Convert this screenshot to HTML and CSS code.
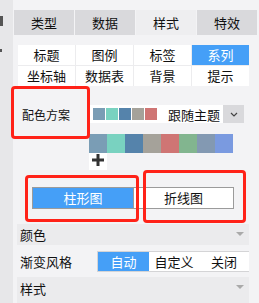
FILE: index.html
```html
<!DOCTYPE html>
<html lang="zh">
<head>
  <meta charset="UTF-8" />
  <title>Series style</title>
  <link rel="stylesheet" href="styles.css">
</head>
<body>
<div class="app">
  <aside class="side">
    <span class="mark mark-a"></span>
    <span class="mark mark-b"></span>
  </aside>

  <main class="panel">
    <!-- top tabs -->
    <div class="tabs">
      <div class="tab">类型</div>
      <div class="tab">数据</div>
      <div class="tab active">样式</div>
      <div class="tab">特效</div>
    </div>

    <!-- sub tabs -->
    <div class="subtabs">
      <div class="sub">标题</div>
      <div class="sub">图例</div>
      <div class="sub">标签</div>
      <div class="sub active">系列</div>
      <div class="sub">坐标轴</div>
      <div class="sub">数据表</div>
      <div class="sub">背景</div>
      <div class="sub">提示</div>
    </div>

    <!-- colour scheme -->
    <div class="scheme-row">
      <div class="scheme-label">配色方案</div>
      <div class="scheme">
        <div class="select">
          <div class="select-box">
            <div class="swatches">
              <span class="sw c1"></span>
              <span class="sw c2"></span>
              <span class="sw c3"></span>
              <span class="sw c4"></span>
              <span class="sw c5"></span>
            </div>
            <span class="select-text">跟随主题</span>
          </div>
          <div class="select-arrow">
            <svg width="8" height="5" viewBox="0 0 8 5"><path d="M1 1 L4 4 L7 1" fill="none" stroke="#444" stroke-width="1.2"/></svg>
          </div>
        </div>
        <div class="palette">
          <span class="c1"></span>
          <span class="c2"></span>
          <span class="c3"></span>
          <span class="c4"></span>
          <span class="c5"></span>
          <span class="c6"></span>
          <span class="c7"></span>
          <span class="c8"></span>
        </div>
        <div class="add">
          <svg width="14" height="14" viewBox="0 0 14 14"><path d="M7 1 V13 M1 7 H13" stroke="#333" stroke-width="3"/></svg>
        </div>
      </div>
    </div>

    <!-- chart type -->
    <div class="chart-type">
      <div class="ct-btn active">柱形图</div>
      <div class="ct-btn">折线图</div>
    </div>

    <div class="section">颜色<span class="caret"></span></div>

    <div class="grad-row">
      <div class="grad-label">渐变风格</div>
      <div class="seg">
        <div class="seg-item active">自动</div>
        <div class="seg-item">自定义</div>
        <div class="seg-item">关闭</div>
      </div>
    </div>

    <div class="section tall">样式<span class="caret"></span></div>
  </main>

  <!-- annotation boxes -->
  <div class="note note-scheme"></div>
  <div class="note note-bar"></div>
  <div class="note note-line"></div>
</div>
</body>
</html>
```

FILE: styles.css
```css
body {
  margin: 0;
  background: #f3f3f5;
  font-family: "Noto Sans CJK SC", "Liberation Sans", sans-serif;
  font-size: 12px;
  color: #111;
}

.app {
  position: relative;
  display: flex;
  width: 259px;
  height: 303px;
  overflow: hidden;
}

.side {
  position: relative;
  width: 13px;
  flex-shrink: 0;
  background: #e7e7e9;
}

.mark {
  position: absolute;
  left: 0;
  background: #555;
}
.mark-a { top: 16px; width: 3px; height: 10px; }
.mark-b { top: 49px; width: 2px; height: 3px; }

.panel {
  flex: 1;
  display: flex;
  flex-direction: column;
}

/* Tabs */
.tabs {
  display: flex;
  gap: 1px;
  margin: 10px 0 0 1px;
}

.tab {
  width: 60px;
  height: 25px;
  line-height: 25px;
  text-align: center;
  background: #d9d9dc;
  font-size: 13px;
}

.tab.active {
  background: #eeeef0;
}

.subtabs {
  display: grid;
  grid-template-columns: repeat(4, 57px);
  grid-auto-rows: 20px;
  gap: 1px;
  margin: 10px 0 0 5px;
  width: 231px;
  background: #ececee;
}

.sub {
  background: #fff;
  text-align: center;
  line-height: 20px;
  font-size: 13px;
}

.sub.active {
  background: #459ff7;
  color: #fff;
}

/* Colour scheme */
.scheme-row {
  display: flex;
}

.scheme-label {
  width: 67px;
  padding: 20px 0 0 9px;
  line-height: 18px;
}

.scheme {
  display: flex;
  flex-direction: column;
  padding-top: 19px;
}

.select {
  display: flex;
  height: 18px;
}

.select-box {
  width: 134px;
  background: #fff;
  display: flex;
  align-items: center;
}

.swatches {
  display: flex;
  gap: 1px;
  margin-left: 4px;
}

.sw {
  width: 12px;
  height: 12px;
}

.select-text {
  margin-left: 11px;
  font-size: 13px;
}

.select-arrow {
  width: 21px;
  background: #d9d9dc;
  display: flex;
  align-items: center;
  justify-content: center;
}

.palette {
  display: flex;
  margin-top: 11px;
  height: 19px;
}

.palette span {
  width: 18px;
}

.c1 { background: #7a9db5; }
.c2 { background: #79d2c0; }
.c3 { background: #5583ab; }
.c4 { background: #a5a29a; }
.c5 { background: #cf7574; }
.c6 { background: #82b58f; }
.c7 { background: #8399b2; }
.c8 { background: #7a9ae0; }

.add {
  width: 18px;
  height: 17px;
  background: #fff;
  display: flex;
  justify-content: center;
  align-items: flex-start;
}

/* Chart type */
.chart-type {
  display: flex;
  margin: 17px 0 0 19px;
}

.ct-btn {
  width: 99px;
  height: 20px;
  line-height: 20px;
  text-align: center;
  background: #fff;
  border: 1px solid #9b9b9b;
  font-size: 13px;
}

.ct-btn.active {
  width: 100px;
  background: #459ff7;
  color: #fff;
  border-right: 0;
}

/* Sections */
.section {
  position: relative;
  margin: 15px 0 0 4px;
  width: 229px;
  height: 21px;
  line-height: 21px;
  padding-left: 3px;
  background: #ebebed;
  font-size: 13px;
}

.section.tall {
  margin-top: 0;
  height: 26px;
  line-height: 24px;
}

.caret {
  position: absolute;
  right: 5px;
  top: 8px;
  border-left: 4px solid transparent;
  border-right: 4px solid transparent;
  border-top: 4px solid #aaa;
}

.grad-row {
  display: flex;
  align-items: center;
  height: 32px;
  margin-left: 7px;
}

.grad-label {
  width: 77px;
  font-size: 13px;
}

.seg {
  display: flex;
  border: 1px solid #d4d4d6;
  border-right: 0;
  background: #fff;
  height: 19px;
}

.seg-item {
  width: 50px;
  line-height: 19px;
  text-align: center;
  font-size: 13px;
}

.seg-item.active {
  width: 51px;
  background: #459ff7;
  color: #fff;
}

/* Red annotation boxes */
.note {
  position: absolute;
  border: 3px solid #ff2218;
  border-radius: 4px;
  box-sizing: border-box;
}

.note-scheme { left: 11px; top: 86px; width: 79px; height: 53px; }
.note-bar { left: 25px; top: 175px; width: 114px; height: 47px; }
.note-line { left: 143px; top: 170px; width: 103px; height: 53px; }
```
